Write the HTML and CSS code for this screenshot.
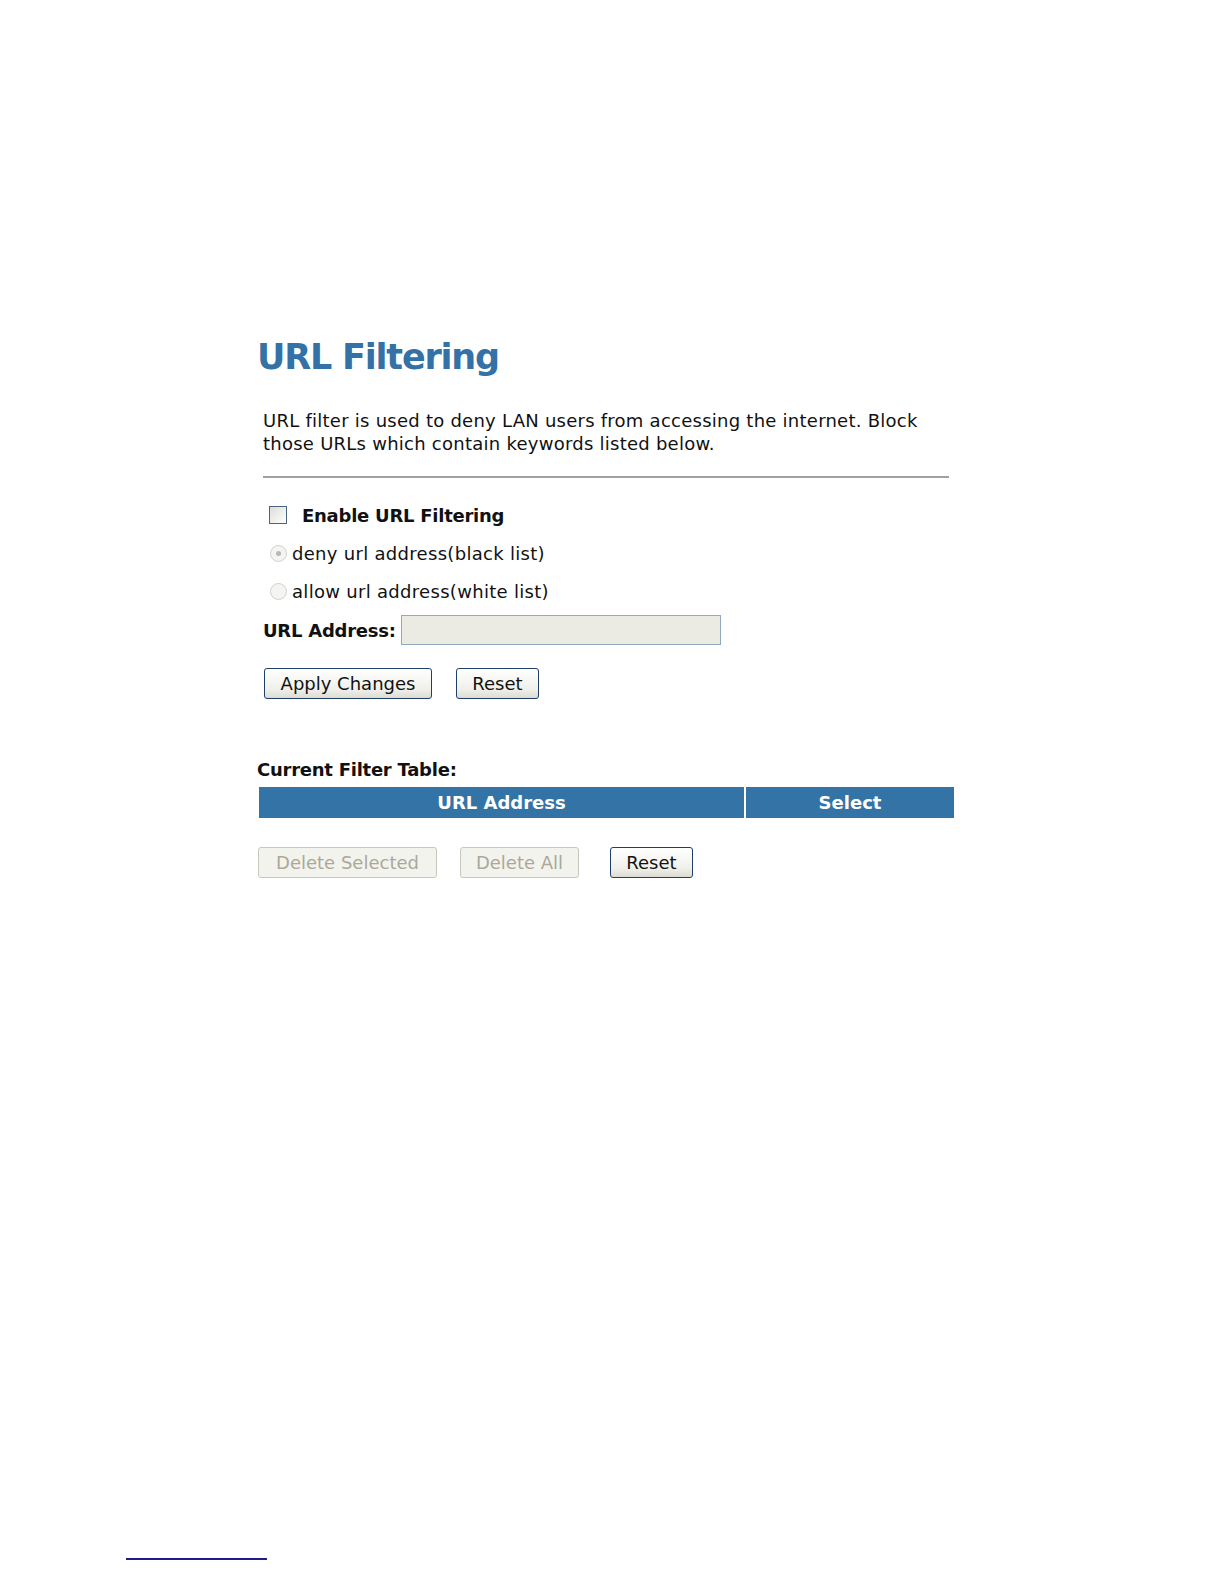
FILE: index.html
```html
<!DOCTYPE html>
<html>
<head>
<meta charset="utf-8">
<link rel="stylesheet" href="styles.css">
</head>
<body>
<div class="page">
  <h1 class="title">URL Filtering</h1>
  <p class="intro">URL filter is used to deny LAN users from accessing the internet. Block those URLs which contain keywords listed below.</p>
  <div class="rule"></div>
  <div class="row row-check">
    <span class="checkbox"></span>
    <span class="label-bold">Enable URL Filtering</span>
  </div>
  <div class="row row-radio">
    <span class="radio checked"></span>
    <span class="label">deny url address(black list)</span>
  </div>
  <div class="row row-radio">
    <span class="radio"></span>
    <span class="label">allow url address(white list)</span>
  </div>
  <div class="row row-input">
    <span class="label-bold">URL Address:</span>
    <span class="textbox"></span>
  </div>
  <div class="buttons buttons-top">
    <button class="btn btn-apply">Apply Changes</button>
    <button class="btn btn-reset">Reset</button>
  </div>
  <div class="table-title">Current Filter Table:</div>
  <div class="table-head">
    <div class="th th-url">URL Address</div>
    <div class="th th-select">Select</div>
  </div>
  <div class="buttons buttons-bottom">
    <button class="btn btn-delsel disabled">Delete Selected</button>
    <button class="btn btn-delall disabled">Delete All</button>
    <button class="btn btn-reset2">Reset</button>
  </div>
</div>
<div class="footer-line"></div>
</body>
</html>
```
FILE: styles.css
```css
html, body {
  margin: 0;
  padding: 0;
  background: #ffffff;
}
body {
  font-family: "DejaVu Sans", Verdana, sans-serif;
  color: #111111;
}
.page {
  padding-top: 333px;
  padding-left: 257px;
  width: 700px;
}
.title {
  margin: 0;
  font-size: 35px;
  font-weight: bold;
  color: #3371a6;
  line-height: 48px;
  letter-spacing: -1.2px;
}
.intro {
  margin: 28px 0 0 6px;
  font-size: 18px;
  line-height: 23px;
  width: 686px;
  letter-spacing: 0.25px;
}
.rule {
  margin: 21px 0 0 6px;
  width: 686px;
  height: 2px;
  background: #a0a0a0;
}
.row {
  display: flex;
  align-items: center;
  font-size: 18px;
}
.row-check {
  margin-top: 25px;
  margin-left: 12px;
  height: 24px;
}
.checkbox {
  width: 16px;
  height: 16px;
  border: 1px solid #4a6482;
  background: linear-gradient(135deg, #dcdcd7, #ffffff);
  margin-right: 15px;
}
.label-bold {
  font-weight: bold;
  letter-spacing: -0.25px;
}
.label {
  margin-left: 5px;
  letter-spacing: 0.3px;
}
.row-radio {
  margin-left: 13px;
  margin-top: 14px;
  height: 24px;
}
.radio {
  width: 17px;
  height: 17px;
  border-radius: 50%;
  border: 1px solid #d0d0cc;
  background: #f4f4f2;
  box-sizing: border-box;
  position: relative;
}
.radio.checked::after {
  content: "";
  position: absolute;
  left: 5px;
  top: 5px;
  width: 5px;
  height: 5px;
  border-radius: 50%;
  background: #b8b8b4;
}
.row-input {
  margin-left: 6px;
  margin-top: 12px;
  height: 30px;
}
.textbox {
  margin-left: 5px;
  width: 318px;
  height: 28px;
  border: 1px solid #8fa9c4;
  background: #ebebe4;
}
.buttons {
  display: flex;
  align-items: center;
}
.buttons-top {
  margin-top: 23px;
  margin-left: 7px;
  gap: 24px;
}
.btn {
  font-family: "DejaVu Sans", Verdana, sans-serif;
  font-size: 18px;
  height: 31px;
  padding: 0;
  border: 1px solid #1f3f6b;
  border-radius: 3px;
  background: linear-gradient(#ffffff, #f0f0ea 70%, #dcdcd4);
  color: #111111;
  box-sizing: border-box;
}
.btn-apply { width: 168px; }
.btn-reset { width: 83px; }
.btn.disabled {
  border-color: #c9c7ba;
  color: #aca899;
  background: #f3f3ee;
}
.table-title {
  margin-top: 59px;
  font-size: 18px;
  font-weight: bold;
  line-height: 24px;
  letter-spacing: -0.25px;
}
.table-head {
  display: flex;
  margin-top: 5px;
  margin-left: 2px;
  width: 695px;
  gap: 2px;
}
.th {
  background: #3473a6;
  color: #ffffff;
  font-weight: bold;
  font-size: 18px;
  height: 31px;
  line-height: 31px;
  text-align: center;
}
.th-url { width: 485px; }
.th-select { flex: 1; }
.buttons-bottom {
  margin-top: 29px;
  margin-left: 1px;
}
.btn-delsel { width: 179px; }
.btn-delall { width: 119px; margin-left: 23px; }
.btn-reset2 { width: 83px; margin-left: 31px; }
.footer-line {
  position: absolute;
  left: 126px;
  top: 1558px;
  width: 141px;
  height: 2px;
  background: #1c1c8a;
}
```
